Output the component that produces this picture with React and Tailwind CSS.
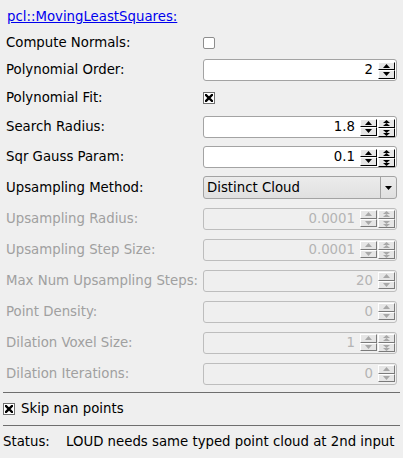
import React from "react";

const FONT = { fontFamily: '"DejaVu Sans", "Liberation Sans", sans-serif' };

function Tri({ dir = "up", double = false, color = "#000" }) {
  if (double) {
    return dir === "up" ? (
      <svg width="7" height="7" viewBox="0 0 7 7">
        <polygon points="3.5,0 7,3 0,3" fill={color} />
        <polygon points="3.5,3 7,6 0,6" fill={color} />
      </svg>
    ) : (
      <svg width="7" height="7" viewBox="0 0 7 7">
        <polygon points="0,1 7,1 3.5,4" fill={color} />
        <polygon points="0,4 7,4 3.5,7" fill={color} />
      </svg>
    );
  }
  return dir === "up" ? (
    <svg width="7" height="4" viewBox="0 0 7 4">
      <polygon points="3.5,0 7,4 0,4" fill={color} />
    </svg>
  ) : (
    <svg width="7" height="4" viewBox="0 0 7 4">
      <polygon points="0,0 7,0 3.5,4" fill={color} />
    </svg>
  );
}

function BtnGroup({ double = false, disabled = false }) {
  const c = disabled ? "#a8a8a8" : "#000";
  const edge = disabled ? "border-[#7a7a7a]" : "border-black";
  return (
    <div className="flex flex-col w-[17px] h-[17px]">
      <div className={`flex-1 flex items-center justify-center bg-[#e6e6e6] border-t border-l border-t-white border-l-white border-b border-r ${edge}`}>
        <Tri dir="up" double={double} color={c} />
      </div>
      <div className={`flex-1 flex items-center justify-center bg-[#e6e6e6] border-t border-l border-t-white border-l-white border-b border-r ${edge}`}>
        <Tri dir="down" double={double} color={c} />
      </div>
    </div>
  );
}

function Spin({ value, double = false, disabled = false }) {
  return (
    <div
      className={`w-[194px] h-[22px] rounded-[3px] border flex items-center justify-end pr-[1px] ${
        disabled ? "bg-[#efefef] border-[#bdbdbd]" : "bg-white border-[#a3a3a3]"
      }`}
    >
      <span className={`text-[13.3px] mr-[5px] ${disabled ? "text-[#b4b4b4]" : "text-black"}`}>{value}</span>
      {double && <BtnGroup double={false} disabled={disabled} />}
      {double && <div className="w-[1px]" />}
      <BtnGroup double={double} disabled={disabled} />
    </div>
  );
}

function Check({ checked }) {
  return (
    <div
      className={`w-[12px] h-[12px] flex items-center justify-center bg-white border ${
        checked ? "border-[#6f6f6f]" : "border-[#8d8d8d] rounded-[2px]"
      }`}
    >
      {checked && (
        <svg width="8" height="8" viewBox="0 0 8 8">
          <path d="M1 1 L7 7 M7 1 L1 7" stroke="#000" strokeWidth="2.4" strokeLinecap="square" />
        </svg>
      )}
    </div>
  );
}

function Row({ h, label, disabled, children }) {
  return (
    <div className="flex items-center" style={{ height: h }}>
      <div className={`w-[203px] shrink-0 pl-[6px] text-[13.3px] whitespace-nowrap ${disabled ? "text-[#a0a0a0]" : "text-black"}`}>{label}</div>
      <div className="flex items-center">{children}</div>
    </div>
  );
}

export default function App() {
  return (
    <div className="w-[403px] h-[458px] bg-[#efefef] overflow-hidden pt-[5px]" style={FONT}>
      <div className="h-[24px] flex items-center pl-[7px]">
        <span className="text-[13.3px] text-[#0000ee] underline">pcl::MovingLeastSquares:</span>
      </div>
      <Row h={27} label="Compute Normals:">
        <Check checked={false} />
      </Row>
      <Row h={28} label="Polynomial Order:">
        <Spin value="2" />
      </Row>
      <Row h={28} label="Polynomial Fit:">
        <Check checked={true} />
      </Row>
      <Row h={30} label="Search Radius:">
        <Spin value="1.8" double />
      </Row>
      <Row h={30} label="Sqr Gauss Param:">
        <Spin value="0.1" double />
      </Row>
      <Row h={31} label="Upsampling Method:">
        <div className="w-[194px] h-[23px] rounded-[3px] border border-[#a3a3a3] bg-gradient-to-b from-[#ececec] to-[#e0e0e0] flex items-center">
          <span className="flex-1 pl-[3px] text-[13.3px] text-black">Distinct Cloud</span>
          <div className="w-[1px] h-full bg-[#a3a3a3]" />
          <div className="w-[15px] flex items-center justify-center">
            <svg width="7" height="4" viewBox="0 0 7 4">
              <polygon points="0,0 7,0 3.5,4" fill="#000" />
            </svg>
          </div>
        </div>
      </Row>
      <Row h={31} label="Upsampling Radius:" disabled>
        <Spin value="0.0001" double disabled />
      </Row>
      <Row h={31} label="Upsampling Step Size:" disabled>
        <Spin value="0.0001" double disabled />
      </Row>
      <Row h={31} label="Max Num Upsampling Steps:" disabled>
        <Spin value="20" disabled />
      </Row>
      <Row h={31} label="Point Density:" disabled>
        <Spin value="0" disabled />
      </Row>
      <Row h={31} label="Dilation Voxel Size:" disabled>
        <Spin value="1" double disabled />
      </Row>
      <Row h={31} label="Dilation Iterations:" disabled>
        <Spin value="0" disabled />
      </Row>
      <div className="h-[3px]" />
      <div className="mx-[3px] h-[1px] bg-[#6e6e6e]" />
      <div className="h-[32px] flex items-center pl-[3px] gap-[6px]">
        <Check checked={true} />
        <span className="text-[13.3px] text-black">Skip nan points</span>
      </div>
      <div className="mx-[3px] h-[1px] bg-[#6e6e6e]" />
      <div className="h-[31px] flex items-center pl-[3px] text-[13.3px] text-black whitespace-nowrap">
        <span className="w-[63px] shrink-0">Status:</span>
        <span>LOUD needs same typed point cloud at 2nd input</span>
      </div>
    </div>
  );
}
